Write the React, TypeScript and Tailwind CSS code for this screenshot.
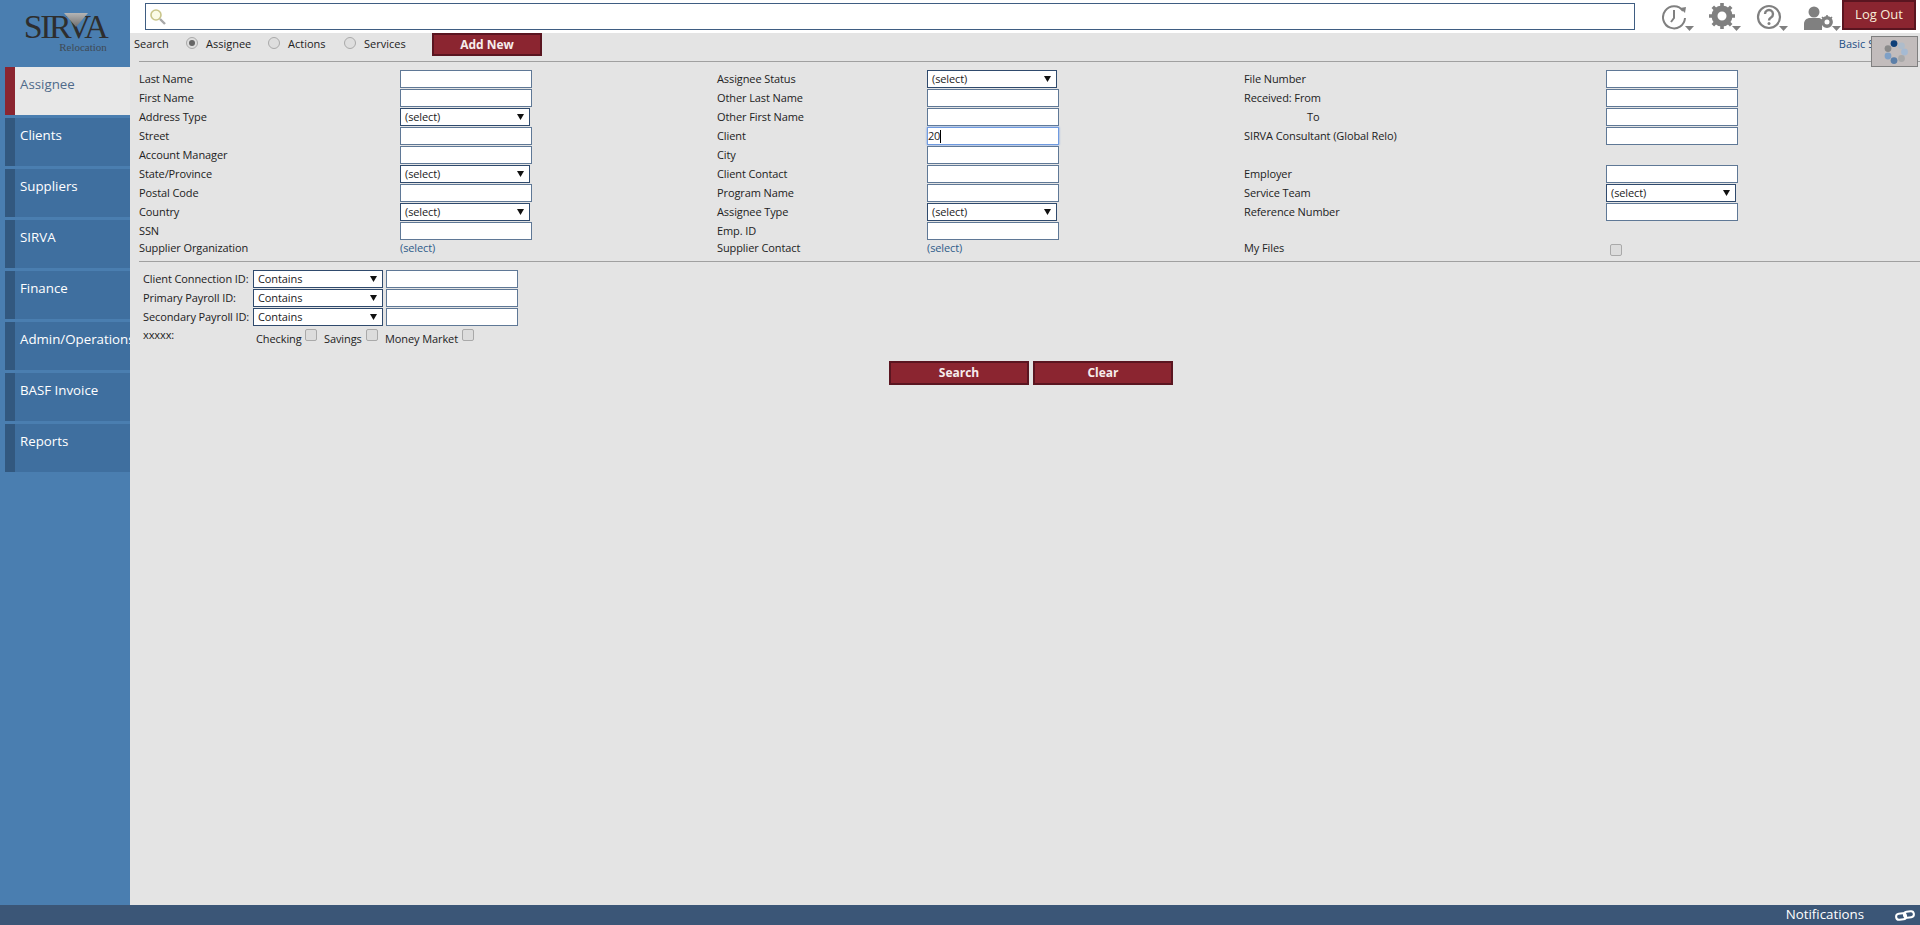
import { ReactNode } from 'react';

const navItems = ['Clients', 'Suppliers', 'SIRVA', 'Finance', 'Admin/Operations', 'BASF Invoice', 'Reports'];

function TextBox() {
  return <input readOnly className="block h-[18px] w-[132px] border border-[#5f7896] bg-white px-[1px] text-[11px] text-[#222] outline-none" />;
}

// focused client box, caret drawn so it shows in a still picture
function FocusedBox({ value }: { value: string }) {
  return (
    <div className="flex h-[18px] w-[132px] items-center border border-[#6f9ae0] bg-white text-[11px] tracking-[-0.3px] text-[#222] shadow-[0_0_2px_#6f9ae0]">
      <span>{value}</span>
      <span className="h-[13px] w-px bg-black" />
    </div>
  );
}

function Dropdown({ label = '(select)' }: { label?: string }) {
  return (
    <div className="flex h-[18px] w-[130px] items-center justify-between border border-[#2f4a6d] bg-white pl-[4px] pr-[5px] text-[11px] tracking-[-0.1px] text-[#222]">
      <span>{label}</span>
      <svg width="7" height="6" viewBox="0 0 7 6">
        <path d="M0 0h7L3.5 6z" fill="#111" />
      </svg>
    </div>
  );
}

function Check() {
  return <span className="block h-[12px] w-[12px] rounded-[2px] border border-[#a9a9a9] bg-[#dcdcdc]" />;
}

function Radio({ on }: { on?: boolean }) {
  return (
    <span className="-mt-[3px] flex h-[12px] w-[12px] items-center justify-center rounded-full border border-[#a9a9a9] bg-[#dedede]">
      {on && <span className="h-[6px] w-[6px] rounded-full bg-[#666]" />}
    </span>
  );
}

function Label({ children }: { children?: ReactNode }) {
  return <div className="flex h-[19px] items-center whitespace-nowrap pb-[1px] text-[11px] tracking-[-0.1px] text-[#222]">{children}</div>;
}

function ShortLabel({ children }: { children: ReactNode }) {
  return <div className="flex h-[14px] items-center whitespace-nowrap text-[11px] tracking-[-0.1px] text-[#222]">{children}</div>;
}

function Field({ children }: { children?: ReactNode }) {
  return <div className="h-[19px]">{children}</div>;
}

function Pick() {
  return <div className="flex h-[14px] items-center text-[11px] tracking-[-0.1px] text-[#2f5c8a]">(select)</div>;
}

function Caret() {
  return (
    <svg width="9" height="5" viewBox="0 0 9 5" className="mt-[23px] -ml-[3px]">
      <path d="M0 0h9L4.5 5z" fill="#808080" />
    </svg>
  );
}

function RedButton({ children, className }: { children: ReactNode; className: string }) {
  return (
    <button className={`border-2 border-[#5a1520] bg-[#8b2530] text-[12px] font-bold text-[#f6ecec] ${className}`}>
      {children}
    </button>
  );
}

export default function App() {
  return (
    <div className="flex h-screen flex-col overflow-hidden bg-[#e4e4e4] font-['Open_Sans',sans-serif]">
      <div className="flex min-h-0 flex-1">
        {/* Left nav */}
        <aside className="w-[130px] shrink-0 bg-[#4a7eb0]">
          <div className="flex h-[67px] flex-col items-center pt-[11px]">
            <div className="relative h-[31px] w-[84px] text-center font-['Liberation_Serif',serif] text-[34px] leading-[31px] tracking-[-2.5px] text-[#2e2e2e]">
              SIRVA
              <svg className="absolute left-[41px] top-[2px]" width="24" height="14" viewBox="0 0 24 14">
                <defs>
                  <linearGradient id="tri" x1="0" y1="0" x2="0" y2="1">
                    <stop offset="0" stopColor="#b5b5b5" />
                    <stop offset="1" stopColor="#6e6e6e" />
                  </linearGradient>
                </defs>
                <path d="M0 0h24L12 14z" fill="url(#tri)" />
              </svg>
            </div>
            <div className="ml-[36px] font-['Liberation_Serif',serif] text-[11px] leading-[11px] text-[#3f4a55]">
              Relocation
            </div>
          </div>
          <div className="flex h-[48px] pl-[5px]">
            <div className="w-[10px] bg-[#8b2530]" />
            <div className="flex-1 bg-[#e8e8e8] pl-[5px] pt-[8px] text-[13.3px] text-[#4f6a8a]">Assignee</div>
          </div>
          {navItems.map(item => (
            <div key={item} className="mt-[3px] flex h-[48px] pl-[5px]">
              <div className="w-[10px] bg-[#32587f]" />
              <div className="flex-1 overflow-hidden whitespace-nowrap bg-[#3f6f9f] pl-[5px] pt-[8px] text-[13.3px] text-white">
                {item}
              </div>
            </div>
          ))}
        </aside>

        <main className="relative min-w-0 flex-1">
          {/* Top bar */}
          <div className="flex h-[33px] items-start bg-white pl-[15px] pt-[3px]">
            <div className="flex h-[27px] w-[1490px] items-center border border-[#3f5d82] bg-white pl-[3px]">
              <svg width="18" height="18" viewBox="0 0 18 18">
                <circle cx="7" cy="7" r="5" fill="#fbfbe6" stroke="#c9c58a" strokeWidth="1.6" />
                <path d="M11 11l5 5" stroke="#a8a8a8" strokeWidth="2.4" />
              </svg>
            </div>
            <div className="ml-[27px] flex">
              <svg width="26" height="28" viewBox="0 0 26 28">
                <path d="M21 8a11 11 0 1 0 2 7" fill="none" stroke="#808080" strokeWidth="2" />
                <path d="M18 5l6-1-1 6z" fill="#808080" />
                <path d="M12 7v8l-3 4" fill="none" stroke="#808080" strokeWidth="2" />
              </svg>
              <Caret />
              <svg width="26" height="28" viewBox="0 0 26 28" className="ml-[15px]">
                <circle cx="13" cy="13" r="7.5" fill="none" stroke="#808080" strokeWidth="6" />
                <path
                  d="M13 0v26M0 13h26M3.8 3.8l18.4 18.4M22.2 3.8L3.8 22.2"
                  stroke="#808080"
                  strokeWidth="3.6"
                  strokeDasharray="4.5 17"
                />
              </svg>
              <Caret />
              <svg width="26" height="28" viewBox="0 0 26 28" className="ml-[15px]">
                <circle cx="13" cy="14" r="11" fill="none" stroke="#808080" strokeWidth="2.2" />
                <path d="M9 11a4 4 0 1 1 6 3.5c-1.4.8-2 1.4-2 3" fill="none" stroke="#808080" strokeWidth="2.4" />
                <circle cx="13" cy="20.5" r="1.5" fill="#808080" />
              </svg>
              <Caret />
              <svg width="32" height="28" viewBox="0 0 32 28" className="ml-[15px]">
                <circle cx="11" cy="9" r="5.5" fill="#808080" />
                <path d="M1 27v-6c0-4 3-6 6-6h8c2 0 3 .6 4 1.6V27z" fill="#808080" />
                <circle cx="24" cy="19" r="4.2" fill="#fff" stroke="#808080" strokeWidth="3.4" />
                <path d="M24 12v14M17 19h14M19 14l10 10M29 14L19 24" stroke="#808080" strokeWidth="1.6" strokeDasharray="2 12" />
              </svg>
              <Caret />
            </div>
            <div className="-mt-[3px] ml-[1px] flex h-[30px] w-[74px] items-center justify-center border-2 border-[#5a1520] bg-[#8b2530] text-[13px] text-[#f8ecd8]">
              Log Out
            </div>
          </div>

          {/* Search type row */}
          <div className="flex h-[23px] items-center pl-[4px] pr-[17px] text-[11px] text-[#222]">
            <span className="w-[40px]">Search</span>
            <span className="ml-[12px]"><Radio on /></span>
            <span className="ml-[8px] w-[45px]">Assignee</span>
            <span className="ml-[17px]"><Radio /></span>
            <span className="ml-[8px] w-[38px]">Actions</span>
            <span className="ml-[18px]"><Radio /></span>
            <span className="ml-[8px] w-[41px]">Services</span>
            <RedButton className="ml-[27px] h-[23px] w-[110px]">Add New</RedButton>
            <span className="ml-auto text-[#1f4f85]">Basic Search</span>
          </div>
          <div className="ml-[9px] mt-[5px] h-px bg-[#a0a0a0]" />

          {/* Main criteria */}
          <div className="grid grid-cols-[261px_317px_210px_317px_362px_132px] pl-[9px] pt-[8px]">
            <Label>Last Name</Label><Field><TextBox /></Field>
            <Label>Assignee Status</Label><Field><Dropdown /></Field>
            <Label>File Number</Label><Field><TextBox /></Field>

            <Label>First Name</Label><Field><TextBox /></Field>
            <Label>Other Last Name</Label><Field><TextBox /></Field>
            <Label>Received: From</Label><Field><TextBox /></Field>

            <Label>Address Type</Label><Field><Dropdown /></Field>
            <Label>Other First Name</Label><Field><TextBox /></Field>
            <Label><span className="pl-[63px]">To</span></Label><Field><TextBox /></Field>

            <Label>Street</Label><Field><TextBox /></Field>
            <Label>Client</Label><Field><FocusedBox value="20" /></Field>
            <Label>SIRVA Consultant (Global Relo)</Label><Field><TextBox /></Field>

            <Label>Account Manager</Label><Field><TextBox /></Field>
            <Label>City</Label><Field><TextBox /></Field>
            <Label /><Field />

            <Label>State/Province</Label><Field><Dropdown /></Field>
            <Label>Client Contact</Label><Field><TextBox /></Field>
            <Label>Employer</Label><Field><TextBox /></Field>

            <Label>Postal Code</Label><Field><TextBox /></Field>
            <Label>Program Name</Label><Field><TextBox /></Field>
            <Label>Service Team</Label><Field><Dropdown /></Field>

            <Label>Country</Label><Field><Dropdown /></Field>
            <Label>Assignee Type</Label><Field><Dropdown /></Field>
            <Label>Reference Number</Label><Field><TextBox /></Field>

            <Label>SSN</Label><Field><TextBox /></Field>
            <Label>Emp. ID</Label><Field><TextBox /></Field>
            <Label /><Field />

            <ShortLabel>Supplier Organization</ShortLabel><Pick />
            <ShortLabel>Supplier Contact</ShortLabel><Pick />
            <ShortLabel>My Files</ShortLabel>
            <div className="h-[14px] pl-[4px] pt-[3px]"><Check /></div>
          </div>
          <div className="ml-[9px] mt-[6px] h-px bg-[#a0a0a0]" />

          {/* Payroll filters */}
          <div className="grid grid-cols-[107px_max-content_max-content] gap-x-[3px] pl-[13px] pt-[8px]">
            {['Client Connection ID:', 'Primary Payroll ID:', 'Secondary Payroll ID:'].map(name => (
              <div key={name} className="contents">
                <Label>{name}</Label>
                <Field><Dropdown label="Contains" /></Field>
                <Field><TextBox /></Field>
              </div>
            ))}
          </div>
          <div className="flex items-start pl-[13px] text-[11px] tracking-[-0.1px] text-[#222]">
            <span className="w-[113px]">xxxxx:</span>
            <span className="w-[45px] pt-[4px]">Checking</span>
            <span className="ml-[4px] mt-[2px]"><Check /></span>
            <span className="ml-[7px] w-[42px] pt-[4px]">Savings</span>
            <span className="mt-[2px]"><Check /></span>
            <span className="ml-[7px] w-[77px] pt-[4px]">Money Market</span>
            <span className="mt-[2px]"><Check /></span>
          </div>

          <div className="flex pl-[759px] pt-[13px]">
            <RedButton className="h-[24px] w-[140px]">Search</RedButton>
            <RedButton className="ml-[4px] h-[24px] w-[140px]">Clear</RedButton>
          </div>

          {/* Loading spinner overlay */}
          <div className="absolute left-[1741px] top-[36px] flex h-[31px] w-[47px] items-center justify-center border border-[#7f7f7f] bg-[#c2bcbc]">
            <svg width="26" height="26" viewBox="0 0 26 26">
              <circle cx="12" cy="4.6" r="3.4" fill="#0f3f78" />
              <circle cx="19.5" cy="6.8" r="3.4" fill="#aebccb" />
              <circle cx="22.5" cy="13" r="3.4" fill="#a5bad2" />
              <circle cx="19.5" cy="19.5" r="3.4" fill="#a9a9a9" />
              <circle cx="12" cy="21.6" r="3.4" fill="#5c7fa8" />
              <circle cx="6" cy="17" r="3.4" fill="#7fa0c6" />
              <circle cx="6" cy="9.6" r="3.4" fill="#8a8a8a" />
            </svg>
          </div>
        </main>
      </div>

      {/* Footer */}
      <footer className="flex h-[20px] shrink-0 items-center justify-end bg-[#3b5677] pr-[5px] text-[13.3px] text-white">
        <span>Notifications</span>
        <svg width="20" height="11" viewBox="0 0 20 11" className="ml-[31px]">
          <g transform="rotate(-8 10 5.5)">
            <rect x="1" y="3" width="10" height="6" rx="3" fill="none" stroke="#fff" strokeWidth="2" />
            <rect x="9" y="2" width="10" height="6" rx="3" fill="none" stroke="#fff" strokeWidth="2" />
          </g>
        </svg>
      </footer>
    </div>
  );
}
